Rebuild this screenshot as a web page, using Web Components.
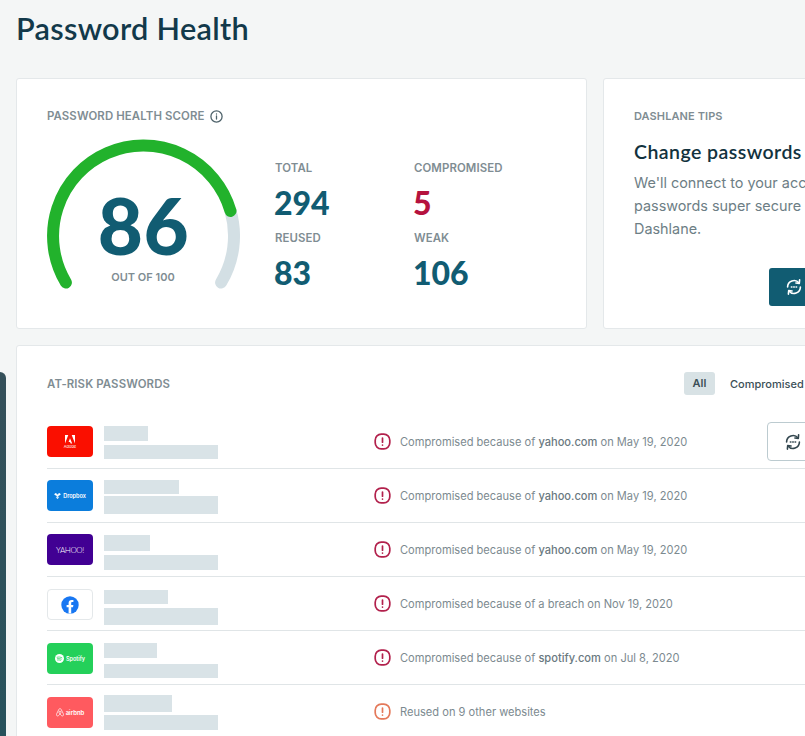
<!DOCTYPE html>
<html lang="en">
<head>
<meta charset="utf-8">
<title>Password Health</title>
<style>
    html, body { margin:0; height:736px; overflow:hidden; background:#f4f6f6; }
    body { font-family:Inter, "Liberation Sans", sans-serif; color:#12323e; }
</style>
</head>
<body>
<ph-page>
    <ph-score-card slot="top"></ph-score-card>
    <ph-tips-card slot="top"></ph-tips-card>
    <ph-risk-card slot="bottom">
        <ph-risk-row brand="adobe" w="44" h1="15" gap="4" h2="14" logo="11" top="11" action>Compromised because of <b>yahoo.com</b> on May 19, 2020</ph-risk-row>
        <ph-risk-row brand="dropbox" w="75" h1="14" gap="2" h2="18" logo="11" top="11">Compromised because of <b>yahoo.com</b> on May 19, 2020</ph-risk-row>
        <ph-risk-row brand="yahoo" w="46" h1="16" gap="4" h2="15" logo="11" top="12">Compromised because of <b>yahoo.com</b> on May 19, 2020</ph-risk-row>
        <ph-risk-row brand="facebook" w="64" h1="14" gap="4" h2="17" logo="12" top="13">Compromised because of a breach on Nov 19, 2020</ph-risk-row>
        <ph-risk-row brand="spotify" w="53" h1="15" gap="6" h2="14" logo="12" top="12">Compromised because of <b>spotify.com</b> on Jul 8, 2020</ph-risk-row>
        <ph-risk-row brand="airbnb" w="68" h1="17" gap="3" h2="15" logo="12" top="10" tone="reused">Reused on 9 other websites</ph-risk-row>
    </ph-risk-card>
</ph-page>
<script>
const SYNC_ICON = (size, color) => `
    <svg width="${size}" height="${size}" viewBox="0 0 18 18" fill="none" stroke="${color}" stroke-width="1.6" stroke-linecap="round" stroke-linejoin="round">
        <path d="M2.6 9A6.4 6.4 0 0 1 14 5"/>
        <path d="M14.6 1.9 14.3 5.4 10.9 5"/>
        <path d="M15.400 9A6.4 6.4 0 0 1 4 13"/>
        <path d="M3.4 16.1 3.7 12.6 7.1 13"/>
        <path d="M6.4 9h.5M8.750 9h.5M11.100 9h.5"/>
    </svg>`;

// page frame, the two rows of cards
customElements.define('ph-page', class extends HTMLElement {
    connectedCallback() {
        this.attachShadow({ mode: 'open' });
        this.shadowRoot.innerHTML = `
            <style>
                :host { display:block; padding:0 0 0 16px; width:1200px; position:relative; }
                h1 { margin:0; padding-top:9px; height:78px; box-sizing:border-box; font:600 30.7px/40px Lato, sans-serif; letter-spacing:.3px; color:#12394a; }
                .top { display:flex; gap:16px; margin-bottom:16px; }
                .edge {
                    position:absolute; left:0; top:372px; width:6px; height:364px;
                    border-top-right-radius:9px;
                    background:linear-gradient(#35505a,#27525c);
                }
            </style>
            <h1>Password Health</h1>
            <div class="top"><slot name="top"></slot></div>
            <slot name="bottom"></slot>
            <div class="edge"></div>
        `;
    }
});

customElements.define('ph-gauge', class extends HTMLElement {
    connectedCallback() {
        this.attachShadow({ mode: 'open' });
        this.shadowRoot.innerHTML = `
            <style>
                :host { display:grid; width:196px; height:156px; margin-left:-1px; }
                svg, .txt { grid-area:1/1; }
                .txt { display:flex; flex-direction:column; align-items:center; }
                .num { font:900 78px/58px Lato, sans-serif; color:#115c72; margin-top:60px; margin-left:-1px; letter-spacing:.5px; }
                .sub { font-size:11px; font-weight:600; line-height:14px; color:#7f8d93; margin-top:16px; margin-left:-2px; }
            </style>
            <svg width="196" height="156" viewBox="0 0 196 156" fill="none" stroke-width="12" stroke-linecap="round">
                <path d="M184.5 74.9A90.5 90.5 0 0 1 175.1 146.5" stroke="#d3dfe4"/>
                <path d="M19.9 146.5A90.5 90.5 0 1 1 184.5 74.9" stroke="#22b22c"/>
            </svg>
            <div class="txt"><div class="num">86</div><div class="sub">OUT OF 100</div></div>
        `;
    }
});

customElements.define('ph-stat', class extends HTMLElement {
    connectedCallback() {
        this.attachShadow({ mode: 'open' });
        const red = this.hasAttribute('red');
        this.shadowRoot.innerHTML = `
            <style>
                :host { display:block; height:70px; }
                .lbl { font-size:11.4px; font-weight:600; line-height:16px; color:#7f8d93; letter-spacing:.1px; }
                .val { font:900 32px/38px Lato, sans-serif; margin:8px 0 0 -1px; color:${red ? '#b5123e' : '#115c72'}; }
            </style>
            <div class="lbl">${this.getAttribute('label')}</div>
            <div class="val">${this.getAttribute('value')}</div>
        `;
    }
});

customElements.define('ph-score-card', class extends HTMLElement {
    connectedCallback() {
        this.attachShadow({ mode: 'open' });
        this.shadowRoot.innerHTML = `
            <style>
                :host { display:block; box-sizing:border-box; width:571px; height:251px; flex:none; background:#fff; border:1px solid #e4e8ea; border-radius:3px; padding:29px 0 0 30px; }
                .head { display:flex; align-items:center; gap:6px; height:16px; font-size:11.4px; font-weight:600; color:#7f8d93; letter-spacing:.12px; }
                .body { display:flex; margin-top:12px; }
                .stats { display:grid; grid-template-columns:139px 139px; margin:24px 0 0 33px; height:140px; }
            </style>
            <div class="head">PASSWORD HEALTH SCORE
                <svg width="13" height="13" viewBox="0 0 13 13" fill="none" stroke="#4f636b" stroke-width="1.3" stroke-linecap="round"><circle cx="6.5" cy="6.5" r="5.6"/><path d="M6.5 6v3"/><path d="M6.5 3.9v.1"/></svg>
            </div>
            <div class="body">
                <ph-gauge></ph-gauge>
                <div class="stats">
                    <ph-stat label="TOTAL" value="294"></ph-stat>
                    <ph-stat label="COMPROMISED" value="5" red></ph-stat>
                    <ph-stat label="REUSED" value="83"></ph-stat>
                    <ph-stat label="WEAK" value="106"></ph-stat>
                </div>
            </div>
        `;
    }
});

customElements.define('ph-tips-card', class extends HTMLElement {
    connectedCallback() {
        this.attachShadow({ mode: 'open' });
        this.shadowRoot.innerHTML = `
            <style>
                :host { display:flex; flex-direction:column; box-sizing:border-box; width:356px; height:251px; flex:none; background:#fff; border:1px solid #e4e8ea; border-radius:3px; padding:29px 30px 22px 30px; }
                .lbl { font-size:11px; font-weight:600; line-height:16px; color:#7f8d93; letter-spacing:.1px; }
                h2 { margin:15px 0 0; font:600 19.5px/26px Lato, sans-serif; letter-spacing:.45px; color:#12323e; white-space:nowrap; }
                p { margin:6px 0 0; font-size:14.4px; line-height:23px; color:#6d7e85; white-space:nowrap; }
                button { align-self:flex-end; margin-top:auto; width:159px; height:38px; border:0; border-radius:3px; background:#115c72; display:flex; align-items:center; padding:0 0 0 16px; }
            </style>
            <div class="lbl">DASHLANE TIPS</div>
            <h2>Change passwords</h2>
            <p>We'll connect to your accounts<br>passwords super secure<br>Dashlane.</p>
            <button aria-label="Change passwords">${SYNC_ICON(18, '#fff')}</button>
        `;
    }
});

customElements.define('ph-risk-card', class extends HTMLElement {
    connectedCallback() {
        this.attachShadow({ mode: 'open' });
        this.shadowRoot.innerHTML = `
            <style>
                :host { display:block; box-sizing:border-box; width:1100px; background:#fff; border:1px solid #e4e8ea; border-radius:3px; padding:26px 0 0 30px; }
                .head { display:grid; grid-template-columns:637px auto; align-items:center; height:23px; margin-bottom:20px; font-size:11.4px; font-weight:600; }
                .lbl { color:#7f8d93; letter-spacing:.12px; }
                .tabs { display:flex; align-items:center; gap:15px; color:#3b4f57; font-size:11px; font-weight:500; }
                .chip { background:#d8e2e5; border-radius:3px; height:23px; line-height:23px; width:31px; text-align:center; font-weight:600; }
            </style>
            <div class="head">
                <div class="lbl">AT-RISK PASSWORDS</div>
                <div class="tabs"><span class="chip">All</span><span>Compromised</span></div>
            </div>
            <slot></slot>
        `;
    }
});

customElements.define('ph-brand', class extends HTMLElement {
    connectedCallback() {
        this.attachShadow({ mode: 'open' });
        const brands = {
            adobe: ['#fa0f00', `<div class="col"><svg width="10" height="9" viewBox="0 0 10 9" fill="#fff"><path d="M0 0h3.3L0 8.6zM10 0H6.7L10 8.6zM5 3.2 7.2 8.6H5.7L5 6.9H3.6z"/></svg><span style="font-size:4px;line-height:5px">Adobe</span></div>`],
            dropbox: ['#0b7ddc', `<svg width="7" height="6" viewBox="0 0 12 10" fill="#fff"><path d="M3 0 6 2 3 4 0 2zM9 0l3 2-3 2-3-2zM3 4.6l3-2 3 2-3 2zM3 7.2 6 7l3 .2L6 10z"/></svg><span style="font-size:5.5px;font-weight:600">Dropbox</span>`],
            yahoo: ['#410093', `<span style="font:300 8px Lato,sans-serif;letter-spacing:-.4px">YAHOO!</span>`],
            facebook: ['#fff', `<svg width="18" height="18" viewBox="0 0 18 18"><circle cx="9" cy="9" r="8.7" fill="#1877f2"/><path d="M7.6 17.6V11.3H5.6V9h2V7.1C7.6 5 8.8 3.9 10.7 3.9c.9 0 1.7.1 1.7.1v2h-1c-1 0-1.2.6-1.2 1.2V9h2.2l-.4 2.3h-1.8v6.3z" fill="#fff"/></svg>`],
            spotify: ['#24d05a', `<svg width="9" height="9" viewBox="0 0 10 10"><circle cx="5" cy="5" r="5" fill="#fff"/><path d="M2.3 3.6c1.8-.5 3.8-.3 5.4.6M2.6 5.2c1.5-.4 3-.2 4.4.5M2.9 6.7c1.2-.3 2.4-.2 3.5.4" stroke="#24d05a" stroke-width=".8" fill="none" stroke-linecap="round"/></svg><span style="font-size:5.5px;font-weight:600">Spotify</span>`],
            airbnb: ['#ff5a5f', `<svg width="8" height="9" viewBox="0 0 10 11" fill="none" stroke="#fff" stroke-width=".9"><path d="M5 7.5C3.6 5.8 3.5 4.7 4 4.2c.5-.4 1.500-.4 2 0 .5.5.4 1.600-1 3.300C3.800 9 2.700 10 1.700 9.800.700 9.600.300 8.400.800 7.200L3.600 1.600C4.300.300 5.700.300 6.400 1.600l2.800 5.600c.5 1.200.1 2.400-.9 2.600C7.300 10 6.200 9 5 7.500z"/></svg><span style="font-size:6px;font-weight:600">airbnb</span>`]
        };
        const [bg, inner] = brands[this.getAttribute('name')];
        const isWhite = bg === '#fff';
        this.shadowRoot.innerHTML = `
            <style>
                :host { display:flex; align-items:center; justify-content:center; gap:2px; box-sizing:border-box; width:46px; height:31px; border-radius:4px; color:#fff; background:${bg}; ${isWhite ? 'border:1px solid #e4e8ea;' : ''} }
                .col { display:flex; flex-direction:column; align-items:center; }
            </style>
            ${inner}
        `;
    }
});

customElements.define('ph-risk-row', class extends HTMLElement {
    connectedCallback() {
        this.attachShadow({ mode: 'open' });
        const a = k => this.getAttribute(k);
        const tone = a('tone') === 'reused' ? '#e4795a' : '#b2214c';
        this.shadowRoot.innerHTML = `
            <style>
                :host { display:block; box-sizing:border-box; height:54px; border-bottom:1px solid #e0e5e7; }
                .row { display:grid; grid-template-columns:46px 114px 134px 382px 60px; column-gap:11px; height:53px; align-items:start; }
                .brand { margin-top:${a('logo')}px; }
                .names { display:flex; flex-direction:column; margin-top:${a('top')}px; }
                .b1 { width:${a('w')}px; height:${a('h1')}px; background:#d9e3e7; }
                .b2 { width:114px; height:${a('h2')}px; margin-top:${a('gap')}px; background:#d9e3e7; }
                .msg { grid-column:4; display:flex; align-items:center; gap:9px; height:53px; font-size:11.1px; color:#7c8a90; white-space:nowrap; }
                .msg svg { flex:none; }
                ::slotted(b) { font-weight:500; color:#6a797f; }
                button { width:60px; height:39px; margin-top:7px; box-sizing:border-box; background:#fff; border:1px solid #bccbd0; border-radius:4px; padding:0 0 0 16px; display:flex; align-items:center; }
            </style>
            <div class="row">
                <ph-brand class="brand" name="${a('brand')}"></ph-brand>
                <div class="names"><div class="b1"></div><div class="b2"></div></div>
                <div class="msg">
                    <svg width="17" height="17" viewBox="0 0 17 17" fill="none" stroke="${tone}" stroke-width="1.7" stroke-linecap="round"><rect x="1.2" y="1.2" width="14.6" height="14.6" rx="6"/><path d="M8.500 5v4.200"/><path d="M8.500 12v.1"/></svg>
                    <span><slot></slot></span>
                </div>
                ${this.hasAttribute('action') ? `<button aria-label="Change password">${SYNC_ICON(18, '#33474f')}</button>` : ''}
            </div>
        `;
    }
});
</script>
</body>
</html>
